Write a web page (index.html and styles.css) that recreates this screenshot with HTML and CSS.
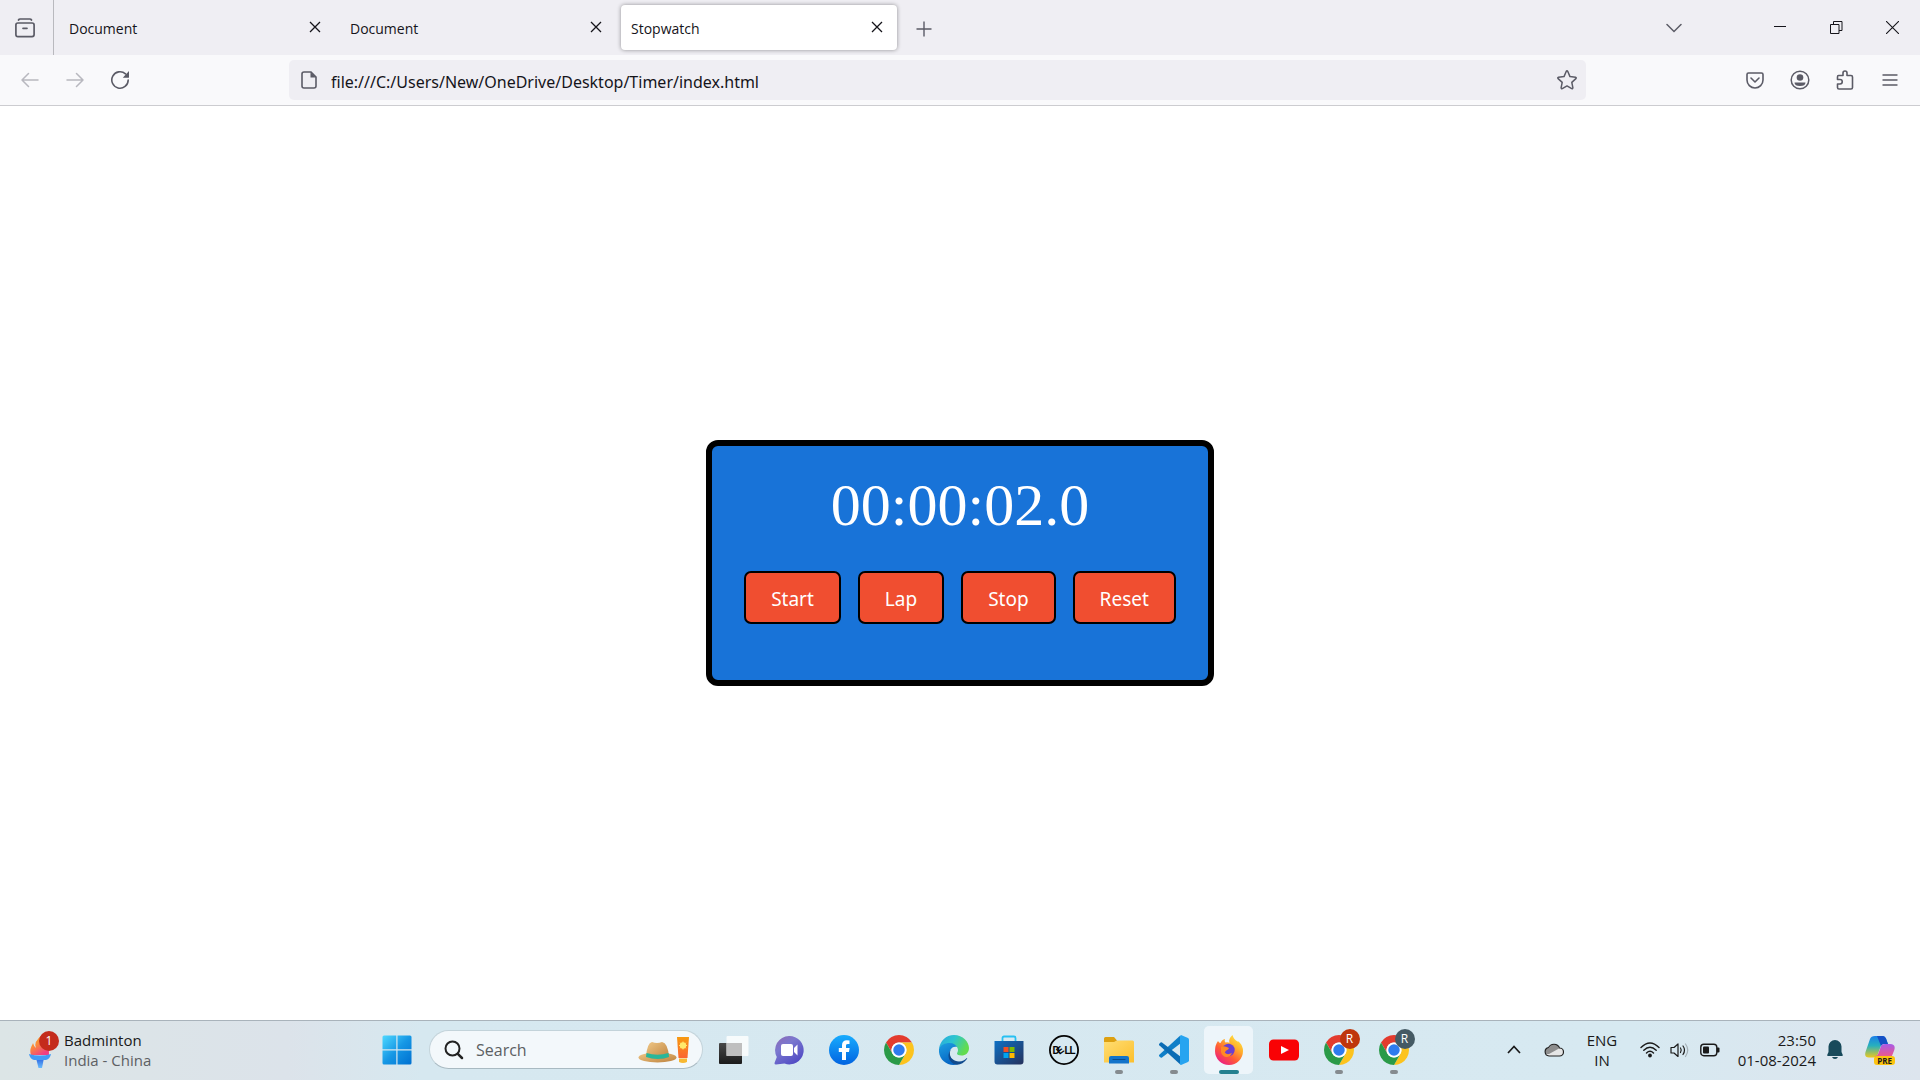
FILE: index.html
```html
<!DOCTYPE html>
<html lang="en">
<head>
<meta charset="utf-8">
<title>Stopwatch</title>
<link rel="stylesheet" href="styles.css">
</head>
<body>
<svg class="defs" aria-hidden="true">
  <defs>
    <linearGradient id="g-win" x1="0" y1="0" x2="1" y2="1"><stop offset="0" stop-color="#4fd8ff"/><stop offset=".5" stop-color="#1597e5"/><stop offset="1" stop-color="#0070d0"/></linearGradient>
    <linearGradient id="g-flame" x1="0" y1="0" x2=".6" y2="1"><stop offset="0" stop-color="#f9a61c"/><stop offset=".5" stop-color="#fb8a3c"/><stop offset="1" stop-color="#ef3f83"/></linearGradient>
    <linearGradient id="g-torch" x1="0" y1="0" x2="0" y2="1"><stop offset="0" stop-color="#2b63e0"/><stop offset="1" stop-color="#6cc0ff"/></linearGradient>
    <linearGradient id="g-hat" x1="0" y1="0" x2="1" y2="1"><stop offset="0" stop-color="#f0c887"/><stop offset="1" stop-color="#bd813d"/></linearGradient>
    <linearGradient id="g-tube" x1="0" y1="0" x2="0" y2="1"><stop offset="0" stop-color="#f79a10"/><stop offset="1" stop-color="#fb6432"/></linearGradient>
    <linearGradient id="g-dark" x1="0" y1="0" x2="0" y2="1"><stop offset="0" stop-color="#484848"/><stop offset="1" stop-color="#1b1b1b"/></linearGradient>
    <linearGradient id="g-chat" x1="0" y1="0" x2=".7" y2="1"><stop offset="0" stop-color="#8f69b4"/><stop offset=".4" stop-color="#7b78cf"/><stop offset="1" stop-color="#504ac4"/></linearGradient>
    <linearGradient id="g-fb" x1="0" y1="0" x2="0" y2="1"><stop offset="0" stop-color="#18acfe"/><stop offset="1" stop-color="#0163e0"/></linearGradient>
    <linearGradient id="g-edge1" x1="0" y1="0" x2="1" y2=".4"><stop offset="0" stop-color="#2aa7e0"/><stop offset=".5" stop-color="#2cc5d0"/><stop offset="1" stop-color="#62dc50"/></linearGradient>
    <linearGradient id="g-edge2" x1="0" y1="0" x2=".4" y2="1"><stop offset="0" stop-color="#1ea0e2"/><stop offset="1" stop-color="#0666c4"/></linearGradient>
    <linearGradient id="g-store" x1="0" y1="0" x2="1" y2="1"><stop offset="0" stop-color="#0d70c4"/><stop offset="1" stop-color="#26315c"/></linearGradient>
    <linearGradient id="g-folder" x1="0" y1="0" x2="1" y2="1"><stop offset="0" stop-color="#ffdd73"/><stop offset="1" stop-color="#fcbf2c"/></linearGradient>
    <linearGradient id="g-fox" x1=".9" y1="0" x2=".2" y2="1"><stop offset="0" stop-color="#fff04a"/><stop offset=".35" stop-color="#ffb02b"/><stop offset=".65" stop-color="#ff5a36"/><stop offset="1" stop-color="#e9178c"/></linearGradient>
    <linearGradient id="g-cop1" x1="0" y1="0" x2="0" y2="1"><stop offset="0" stop-color="#1a7fe8"/><stop offset=".45" stop-color="#27b0bd"/><stop offset="1" stop-color="#ecc91e"/></linearGradient>
    <linearGradient id="g-cop2" x1="0" y1="0" x2="0" y2="1"><stop offset="0" stop-color="#a85be8"/><stop offset=".5" stop-color="#e0589c"/><stop offset="1" stop-color="#f77a55"/></linearGradient>
    <symbol id="i-close" viewBox="0 0 12 12"><path d="M1 1l10 10M11 1L1 11" fill="none" stroke="currentColor" stroke-width="1.3"/></symbol>
    <symbol id="i-chrome" viewBox="2 2 44 44">
      <path fill="#e33b2e" d="M4.95 13A22 22 0 0 1 43.05 13H24A11 11 0 0 0 14.47 29.5Z"/>
      <path fill="#fcc31e" d="M43.05 13A22 22 0 0 1 24 46L33.53 29.5A11 11 0 0 0 24 13Z"/>
      <path fill="#2a9a48" d="M24 46A22 22 0 0 1 4.95 13L14.47 29.5A11 11 0 0 0 33.53 29.5Z"/>
      <circle cx="24" cy="24" r="11" fill="#fff"/><circle cx="24" cy="24" r="8.4" fill="#2f7bee"/>
    </symbol>
  </defs>
</svg>

<header class="tabstrip">
  <button class="view-button" aria-label="Firefox View">
    <svg width="20" height="20" viewBox="0 0 20 20" fill="none" stroke="currentColor" stroke-width="1.7" stroke-linecap="round"><rect x=".9" y="5" width="18.2" height="13.6" rx="2"/><path d="M3.5 2Q4 1 5.200 1H14.800Q16 1 16.500 2M8 10.300h4"/></svg>
  </button>
  <div class="tabs" role="tablist">
    <div class="tab" role="tab"><span>Document</span><button class="tab-close" aria-label="Close tab"><svg width="12" height="12"><use href="#i-close"/></svg></button></div>
    <div class="tab" role="tab"><span>Document</span><button class="tab-close" aria-label="Close tab"><svg width="12" height="12"><use href="#i-close"/></svg></button></div>
    <div class="tab tab-active" role="tab" aria-selected="true"><span>Stopwatch</span><button class="tab-close" aria-label="Close tab"><svg width="12" height="12"><use href="#i-close"/></svg></button></div>
  </div>
  <button class="new-tab" aria-label="New tab"><svg width="16" height="16" viewBox="0 0 16 16" fill="none" stroke="currentColor" stroke-width="1.4"><path d="M8 .5v15M.5 8h15"/></svg></button>
  <button class="list-tabs" aria-label="List all tabs"><svg width="16" height="10" viewBox="0 0 16 10" fill="none" stroke="currentColor" stroke-width="1.500" stroke-linecap="round"><path d="M1 1.500l7 7 7-7"/></svg></button>
  <div class="window-controls">
    <button aria-label="Minimize"><svg width="13" height="13" viewBox="0 0 13 13"><path d="M0 5.500h12" stroke="currentColor"/></svg></button>
    <button aria-label="Restore"><svg width="13" height="13" viewBox="0 0 13 13" fill="none" stroke="currentColor"><path d="M.5 3.500h8.500v9H.5zM3.500 3.500V.5h8.500V9.500H9"/></svg></button>
    <button aria-label="Close"><svg width="13" height="13" viewBox="0 0 12 12"><path d="M0 0l12 12M12 0L0 12" stroke="currentColor"/></svg></button>
  </div>
</header>

<nav class="toolbar">
  <div class="tool-group">
    <button class="dim" aria-label="Back"><svg width="18" height="16" viewBox="0 0 18 16" fill="none" stroke="currentColor" stroke-width="1.500" stroke-linecap="round" stroke-linejoin="round"><path d="M17 8H1M7.500 1.500L1 8l6.500 6.500"/></svg></button>
    <button class="dim" aria-label="Forward"><svg width="18" height="16" viewBox="0 0 18 16" fill="none" stroke="currentColor" stroke-width="1.500" stroke-linecap="round" stroke-linejoin="round"><path d="M1 8h16M10.500 1.500L17 8l-6.500 6.500"/></svg></button>
    <button aria-label="Reload"><svg width="20" height="20" viewBox="0 0 20 20"><path d="M18.200 10A8.200 8.200 0 1 1 15.500 3.900" fill="none" stroke="currentColor" stroke-width="1.600" stroke-linecap="round"/><path d="M19 1v6.200q0 .6-.6.6h-5.600z" fill="currentColor"/></svg></button>
  </div>
  <div class="urlbar">
    <svg width="16" height="18" viewBox="0 0 16 18"><path d="M3 1h7l5 5v9a2 2 0 0 1-2 2H3a2 2 0 0 1-2-2V3a2 2 0 0 1 2-2z" fill="none" stroke="currentColor" stroke-width="1.600"/><path d="M9.500 1v5.500H15z" fill="currentColor"/></svg>
    <input type="text" aria-label="Address" value="file:///C:/Users/New/OneDrive/Desktop/Timer/index.html">
    <button aria-label="Bookmark this page"><svg width="20" height="20" viewBox="0 0 20 20" fill="none" stroke="currentColor" stroke-width="1.500" stroke-linejoin="round"><path d="M9.200 1.500q.8-1.300 1.600 0L13 6.600l5.500.6q1.200.4.400 1.400L14.800 12.400l1.100 5.400q-.1 1.200-1.200.8L10 15.900l-4.700 2.700q-1.100.4-1.200-.8l1.100-5.400L1.100 8.600Q.3 7.600 1.500 7.200L7 6.600z"/></svg></button>
  </div>
  <div class="tool-group">
    <button aria-label="Save to Pocket"><svg width="18" height="17" viewBox="0 0 18 17" fill="none" stroke="currentColor" stroke-width="1.600" stroke-linecap="round" stroke-linejoin="round"><path d="M2.500 1h13A1.500 1.500 0 0 1 17 2.500V8A8 8 0 0 1 1 8V2.500A1.500 1.500 0 0 1 2.500 1zM5 6l4 4 4-4"/></svg></button>
    <button aria-label="Account"><svg width="20" height="20" viewBox="0 0 20 20"><circle cx="10" cy="10" r="8.800" fill="none" stroke="currentColor" stroke-width="1.500"/><circle cx="10" cy="7.500" r="3.300" fill="currentColor"/><path d="M4.500 12.500h11q0 3.500-5.500 3.500t-5.500-3.500z" fill="currentColor"/></svg></button>
    <button aria-label="Extensions"><svg width="18" height="20" viewBox="0 0 18 20" fill="none" stroke="currentColor" stroke-width="1.600" stroke-linejoin="round"><path d="M2.500 5.500H7V3a2 2 0 0 1 4 0v2.500h4A1.500 1.500 0 0 1 16.500 7v10.500A1.500 1.500 0 0 1 15 19H3a1.500 1.500 0 0 1-1.500-1.500V14H4a2 2 0 0 0 0-4.500H1.500V7q0-1.500 1-1.500z"/></svg></button>
    <button aria-label="Menu"><svg width="16" height="14" viewBox="0 0 16 14" stroke="currentColor" stroke-width="1.400" stroke-linecap="round"><path d="M1 2h14M1 7h14M1 12h14"/></svg></button>
  </div>
</nav>

<main class="page">
  <section class="stopwatch">
    <div class="display">00:00:02.0</div>
    <div class="controls">
      <button>Start</button>
      <button>Lap</button>
      <button>Stop</button>
      <button>Reset</button>
    </div>
  </section>
</main>

<footer class="taskbar">
  <button class="widget">
    <span class="icon-wrap">
      <svg width="24" height="36" viewBox="0 0 24 36"><path d="M3 23C1 17 4 14 5 11q1 4 3 5Q5 10 14 3q8 8 7 20z" fill="url(#g-flame)"/><path d="M8 26h8l-2 10q-2 1-3.500 0z" fill="url(#g-torch)"/><path d="M1 22q11 3 22 0-1 5-5 6H6q-4-1-5-6z" fill="#429af5"/></svg>
      <span class="badge badge-alert">1</span>
    </span>
    <span class="widget-text"><span>Badminton</span><span class="muted">India - China</span></span>
  </button>

  <div class="apps">
    <button aria-label="Start"><svg width="30" height="30" viewBox="0 0 30 30"><path fill="url(#g-win)" d="M2 .5h12.300v13.800H.5V2A1.500 1.500 0 0 1 2 .5zM15.500.5H28A1.500 1.500 0 0 1 29.500 2v12.300h-14zM.5 15.500h13.800v14H2A1.500 1.500 0 0 1 .5 28zM15.500 15.500h14V28a1.500 1.500 0 0 1-1.500 1.500H15.500z"/></svg></button>
    <label class="search">
      <svg width="20" height="20" viewBox="0 0 20 20" fill="none" stroke="#222" stroke-linecap="round"><circle cx="8.500" cy="8.500" r="7" stroke-width="2"/><path d="M13.800 13.800L18 18" stroke-width="2.500"/></svg>
      <input type="text" placeholder="Search" aria-label="Search">
      <svg width="52" height="28" viewBox="0 0 52 28"><ellipse cx="19.500" cy="21.500" rx="19" ry="5" fill="url(#g-hat)"/><path d="M8 21Q9 7 14 6q5 2 10 0 6 1 7 15-11 5-23 0z" fill="url(#g-hat)"/><path d="M8.500 17q11 3.500 22 0l.5 4q-11 4-23 0z" fill="#29b79a"/><path d="M39 1h12l-1.500 21h-9z" fill="url(#g-tube)"/><path d="M41 22.500h8V26q-4 2-8 0z" fill="#f7b832"/><circle cx="45" cy="9.500" r="3.200" fill="#ffe96b"/><path d="M45 5.500v8M41 9.500h8M42.200 6.700l5.600 5.600M47.800 6.700l-5.600 5.600" stroke="#ffe96b"/></svg>
    </label>
    <button aria-label="Task View"><svg width="30" height="30" viewBox="0 0 30 30"><rect y="8" width="23" height="21" rx="1" fill="url(#g-dark)"/><rect x="7.500" y="1" width="22" height="20" rx="1" fill="#fff" fill-opacity=".8"/><path d="M7.500 8H23v13H7.500z" fill="#bfbfbf"/></svg></button>
    <button aria-label="Chat"><svg width="30" height="30" viewBox="0 0 30 30"><path d="M15 1a14.200 14.200 0 1 1-4.500 27.500L2 29.500q-2 0-1.300-2L2.800 22A14.200 14.200 0 0 1 15 1z" fill="url(#g-chat)"/><rect x="7" y="9" width="12" height="12" rx="2" fill="#fff"/><path d="M20 13l3.500-3.500v11L20 17z" fill="#fff"/></svg></button>
    <button aria-label="Facebook"><svg width="30" height="30" viewBox="0 0 30 30"><circle cx="15" cy="15" r="15" fill="url(#g-fb)"/><path d="M13 25V17H9.800v-4H13v-2.800C13 6.800 15 5.300 17.800 5.300l2.700.3V9h-1.700C17.200 9 17 9.800 17 10.800V13h3.600l-.6 4h-3v8z" fill="#fff"/></svg></button>
    <button aria-label="Chrome"><svg width="30" height="30"><use href="#i-chrome"/></svg></button>
    <button aria-label="Edge"><svg width="30" height="30" viewBox="0 0 30 30"><path d="M0 14C1 6 7 0 15 0c9 0 15 7 15 13 0 5-3.500 7.500-7.500 7.500-3 0-4.500-1-4.500-2 0-.8 1-1.500 1-3.500 0-3-3-6-8-6C6 9 1.500 11.500 0 14z" fill="url(#g-edge1)"/><path d="M0 14c1.500-4 6-6 10.500-6 4 0 6.500 2 7.500 4-6-2-10 6-5.500 12 3 3.500 4 5 6 5.300C9 32-1 25 0 14z" fill="url(#g-edge2)"/><path d="M11 17c-1 5 3 9.500 9 9.500 3.500 0 6-1.700 7.500-3.200.4-.4.900.1.600.5C24 30 17 31 13.500 28 8.500 24.500 8 18.500 13 13c-1 1-1.700 2.500-2 4z" fill="#104a8d"/></svg></button>
    <button aria-label="Microsoft Store"><svg width="30" height="30" viewBox="0 0 30 30"><path d="M8.500 6V3A1.500 1.500 0 0 1 10 1.500h10A1.500 1.500 0 0 1 21.500 3v3" fill="none" stroke="#26c0f2" stroke-width="1.800"/><path d="M.5 6h29v20.500a3 3 0 0 1-3 3h-23a3 3 0 0 1-3-3z" fill="url(#g-store)"/><path d="M9.500 12h5v5h-5z" fill="#f25022"/><path d="M15.500 12h5v5h-5z" fill="#7fba00"/><path d="M9.500 18h5v5h-5z" fill="#00a4ef"/><path d="M15.500 18h5v5h-5z" fill="#ffb900"/></svg></button>
    <button aria-label="Dell"><svg width="30" height="30" viewBox="0 0 30 30"><circle cx="15" cy="15" r="14.100" fill="none" stroke="#050505" stroke-width="1.800"/><text class="dell" x="3.500 10.500 15.500 20.500" y="18.500 20 18.500 18.500" rotate="0 -38 0 0">DELL</text></svg></button>
    <button class="open" aria-label="File Explorer"><svg width="30" height="30" viewBox="0 0 30 30"><path d="M0 3.500A1.500 1.500 0 0 1 1.500 2H10l3 3.500L10 8H0z" fill="#dda011"/><path d="M0 7h10l3-1.500h15.500A1.500 1.500 0 0 1 30 7v20.500H0z" fill="url(#g-folder)"/><path d="M5 28.500V23a2 2 0 0 1 2-2h16a2 2 0 0 1 2 2v5.500z" fill="#1374ca"/><path d="M9 24.500h12" stroke="#0a4c8c" stroke-width="1.200" stroke-linecap="round"/></svg></button>
    <button class="open" aria-label="Visual Studio Code"><svg width="30" height="30" viewBox="0 0 30 30"><path d="M22 8L3 22.500Q2 23 1.200 22.300L.3 21.300Q-.4 20.500.3 19.800L21 .8z" fill="#0f7fc8"/><path d="M22 22L3 7.500Q2 7 1.200 7.700L.3 8.700Q-.4 9.500.3 10.200L21 29.200z" fill="#0a6cb5"/><path d="M22 0l7 3q1 .5 1 1.700v20.600q0 1.200-1 1.700l-7 3q-.6-.3-1-1z" fill="#27a4f0"/><path d="M21 1l1-1v30l-1-1z" fill="#27a4f0"/></svg></button>
    <button class="open focused" aria-label="Firefox"><svg width="30" height="30" viewBox="0 0 30 30"><path d="M4 6q1 2 2.500 2Q8 4.500 11 4q-1 2 .5 3.500 2-.5 4 .2Q14 4 18.500 0q1 4 5 6.500Q25 6 25.500 7.500 29 11 29 16A14 14 0 1 1 1 16Q1 10 4 6z" fill="url(#g-fox)"/><circle cx="14.500" cy="15" r="6.200" fill="#6a3fd0"/><path d="M7 12q3-2 7.500.8 1 .7-.5 1.700-2.500 1-3.200 3Q13 20.500 18 18q-2 4.500-6 4-4-.8-5-5z" fill="#ff8a24"/></svg></button>
    <button aria-label="YouTube"><svg width="30" height="30" viewBox="0 0 30 30"><rect y="4.500" width="30" height="21" rx="4.500" fill="#f90205"/><path d="M12 11v8l8-4z" fill="#fff"/></svg></button>
    <button class="open" aria-label="Chrome, profile 1"><span class="icon-wrap"><svg width="30" height="30"><use href="#i-chrome"/></svg><span class="badge badge-red">R</span></span></button>
    <button class="open" aria-label="Chrome, profile 2"><span class="icon-wrap"><svg width="30" height="30"><use href="#i-chrome"/></svg><span class="badge badge-slate">R</span></span></button>
  </div>

  <div class="tray">
    <button class="tray-up" aria-label="Show hidden icons"><svg width="14" height="9" viewBox="0 0 14 9" fill="none" stroke="currentColor" stroke-width="1.700"><path d="M1 8l6-6.500L13 8"/></svg></button>
    <button class="tray-cloud" aria-label="OneDrive"><svg width="20" height="14" viewBox="0 0 20 14"><path d="M5 13a4.200 4.200 0 0 1-.5-8.300A6 6 0 0 1 15.500 5 4 4 0 0 1 15.500 13z" fill="#e6e6e6"/><path d="M1.500 11Q0 6 5 5.200 7 1 10.500 1.300 14 1.500 15 5.500L5 11z" fill="#8d8d8d"/><path d="M5 13a4.200 4.200 0 0 1-.5-8.300A6 6 0 0 1 15.500 5 4 4 0 0 1 15.500 13z" fill="none" stroke="#222" stroke-width="1.200"/></svg></button>
    <button class="lang"><span>ENG</span><span>IN</span></button>
    <button class="status" aria-label="Network, volume and battery">
      <svg width="20" height="16" viewBox="0 0 20 16" fill="none" stroke="currentColor" stroke-width="1.400" stroke-linecap="round"><path d="M1 5.500q9-9 18 0M3.800 8.300q6.200-6 12.400 0M6.500 11q3.500-3.300 7 0"/><circle cx="10" cy="13.500" r="1.200" fill="currentColor"/></svg>
      <svg width="20" height="16" viewBox="0 0 20 16" fill="none" stroke="currentColor" stroke-width="1.200" stroke-linecap="round" stroke-linejoin="round"><path d="M1 5.500h3L8 2v12.500L4 11H1zM10.500 6q1.500 2 0 4.500M13 4q3 4 0 8.500"/><path d="M15.500 2q4.500 6 0 12.500" stroke="#a5b0b6"/></svg>
      <svg width="20" height="14" viewBox="0 0 20 14"><rect x=".8" y="1.300" width="16" height="11.400" rx="3" fill="none" stroke="currentColor" stroke-width="1.400"/><rect x="3" y="3.500" width="6" height="7" rx="1" fill="currentColor"/><path d="M17 4.500h1.500q1 0 1 1v3q0 1-1 1H17z" fill="currentColor"/></svg>
    </button>
    <button class="clock"><span>23:50</span><span>01-08-2024</span></button>
    <button class="bell" aria-label="Notifications"><svg width="16" height="20" viewBox="0 0 16 20" fill="#184a5b"><path d="M8 0a6.500 6.500 0 0 1 6.500 6.500V12l1.300 3q.2 1-.8 1H1q-1 0-.8-1l1.300-3V6.500A6.500 6.500 0 0 1 8 0zM5 17h6q-.8 2-3 2t-3-2z"/></svg></button>
    <button class="copilot" aria-label="Copilot"><span class="icon-wrap"><svg width="30" height="28" viewBox="0 0 30 28"><path d="M10 0h8q2 0 3 2.500L23 8h-4q-2.500 0-3.500 3l-3 8q-1 2.500-4 2.500H4Q-1 21.500.5 16L5 3q1-3 5-3z" fill="url(#g-cop1)"/><path d="M12 0h6q2 0 3 2.500L23 8h-4q-2 0-3 2z" fill="#1450c5"/><path d="M20 28h-8q-2 0-2-2.500V20q2.500 0 3.500-3l2.500-7q1-2 4-2h5q6 0 4.300 6L25 25q-1 3-5 3z" fill="url(#g-cop2)"/></svg><span class="pre">PRE</span></span></button>
  </div>
</footer>
</body>
</html>
```
FILE: styles.css
```css
* { box-sizing: border-box; }

body {
  margin: 0;
  min-height: 100vh;
  display: flex;
  flex-direction: column;
  background: #fff;
  color: #15141a;
  font-family: "Open Sans", "Noto Sans", sans-serif;
  font-size: 14px;
}

button,
input {
  font: inherit;
  color: inherit;
  border: 0;
  padding: 0;
  background: none;
}

svg { display: block; flex: none; }
.defs { position: absolute; width: 0; height: 0; }

/* Tab strip */
.tabstrip {
  display: flex;
  align-items: stretch;
  height: 55px;
  background: #efeef3;
}

.tabstrip button {
  display: flex;
  align-items: center;
  justify-content: center;
}

.view-button {
  width: 54px;
  color: #5b5b66;
}

.tabstrip .view-button {
  padding: 1px 4px 0 0;
  border-right: 1px solid #b9b9be;
}

.tabs {
  display: flex;
  gap: 5px;
  padding: 5px;
}

.tab {
  display: flex;
  align-items: center;
  justify-content: space-between;
  width: 276px;
  padding: 2px 14px 0 10px;
  border-radius: 4px;
}

.tab-active {
  background: #fff;
  box-shadow: 0 0 4px rgba(0, 0, 0, 0.4);
}

.tab-close { padding-bottom: 3px; }

.new-tab {
  width: 44px;
  padding-top: 2px;
  color: #5b5b66;
}

.list-tabs {
  width: 48px;
  margin-left: auto;
  color: #5b5b66;
}

.window-controls {
  display: flex;
  margin-left: 54px;
}

.window-controls button { width: 56px; }

/* Navigation bar */
.toolbar {
  display: flex;
  align-items: center;
  justify-content: space-between;
  height: 51px;
  padding: 0 8px 0 7px;
  background: #f9f9fb;
  border-bottom: 1px solid #ccccd0;
  color: #5b5b66;
}

.tool-group { display: flex; }

.tool-group button {
  display: flex;
  align-items: center;
  justify-content: center;
  width: 45px;
  height: 40px;
}

.tool-group .dim { color: #b8b8bf; }

.urlbar {
  display: flex;
  flex: 1;
  align-items: center;
  gap: 14px;
  height: 40px;
  margin: 0 146px 0 147px;
  padding: 0 9px 0 12px;
  border-radius: 5px;
  background: #efeef3;
}

.urlbar input {
  flex: 1;
  padding-top: 3px;
  color: #15141a;
  font-family: "Noto Sans", sans-serif;
  font-size: 16px;
}

/* Stopwatch */
.page {
  flex: 1;
  display: flex;
  align-items: center;
  justify-content: center;
}

.stopwatch {
  padding: 25px 32px 56px;
  border: 6px solid #000;
  border-radius: 12px;
  background: #1873d8;
  color: #fff;
}

.display {
  margin-bottom: 31px;
  font: 60px/69px "Liberation Serif", "Times New Roman", serif;
  text-align: center;
}

.controls {
  display: flex;
  gap: 17px;
}

.controls button {
  height: 53px;
  padding: 2px 25px 0;
  border: 2px solid #000;
  border-radius: 7px;
  background: #f04e30;
  font-family: "Noto Sans", sans-serif;
  font-size: 19px;
}

/* Taskbar */
.taskbar {
  display: flex;
  align-items: center;
  height: 60px;
  padding-bottom: 2px;
  border-top: 1px solid #a9b3bb;
  background: linear-gradient(90deg, #dce5e6 0, #dce3ea 15%, #d6e8f0 22%, #d7e9f1 85%, #dde5ee 100%);
  color: #1a1a1a;
  font-size: 15px;
}

.taskbar button {
  display: flex;
  align-items: center;
  justify-content: center;
}

.icon-wrap {
  position: relative;
  display: block;
}

.badge {
  position: absolute;
  top: -6px;
  right: -6px;
  width: 20px;
  border-radius: 50%;
  color: #fff;
  font-size: 12px;
  line-height: 20px;
  text-align: center;
}

.badge-alert {
  top: -1px;
  right: -7px;
  background: #c42b1c;
}

.badge-red { background: #bf360c; }
.badge-slate { background: #455a64; }

.taskbar .widget {
  width: 369px;
  gap: 12px;
  padding-left: 28px;
  justify-content: flex-start;
  line-height: 20px;
  text-align: left;
}

.widget-text,
.lang,
.clock {
  display: flex;
  flex-direction: column;
}

.muted { color: #5c6063; }

.apps {
  display: flex;
  align-items: center;
}

.apps button {
  position: relative;
  width: 55px;
  height: 48px;
}

.search {
  display: flex;
  align-items: center;
  gap: 12px;
  width: 274px;
  height: 39px;
  margin: 0 3px 0 5px;
  padding: 0 12px 0 14px;
  border: 1px solid #c3d3da;
  border-bottom-color: #a9bac2;
  border-radius: 20px;
  background: #f3f8fb;
}

.search input {
  flex: 1;
  min-width: 0;
  font-size: 16px;
}

.search input::placeholder { color: #5c6063; opacity: 1; }

.dell {
  font: bold 10px "Liberation Sans", sans-serif;
  fill: #050505;
}

.apps .open::after {
  content: "";
  position: absolute;
  bottom: 0;
  left: 50%;
  width: 8px;
  height: 4px;
  margin-left: -4px;
  border-radius: 2px;
  background: #858b8f;
}

.apps .focused {
  width: 49px;
  margin: 0 3px;
  border-radius: 5px;
  background: #edf5fa;
}

.apps .focused::after {
  width: 20px;
  margin-left: -10px;
  background: #24808f;
}

.tray {
  display: flex;
  align-items: center;
  margin-left: auto;
  padding-right: 25px;
  line-height: 20px;
}

.tray-up { width: 40px; }
.tray-cloud { width: 40px; }
.lang { width: 56px; }

.taskbar .status {
  gap: 10px;
  width: 100px;
}

.taskbar .clock {
  width: 86px;
  align-items: flex-end;
}

.bell { width: 38px; }

.copilot { margin-left: 11px; }

.pre {
  position: absolute;
  right: 0;
  bottom: -1px;
  padding: 0 3px;
  border-radius: 3px;
  background: #fcc40f;
  font-size: 8px;
  font-weight: bold;
  line-height: 9px;
}
```
